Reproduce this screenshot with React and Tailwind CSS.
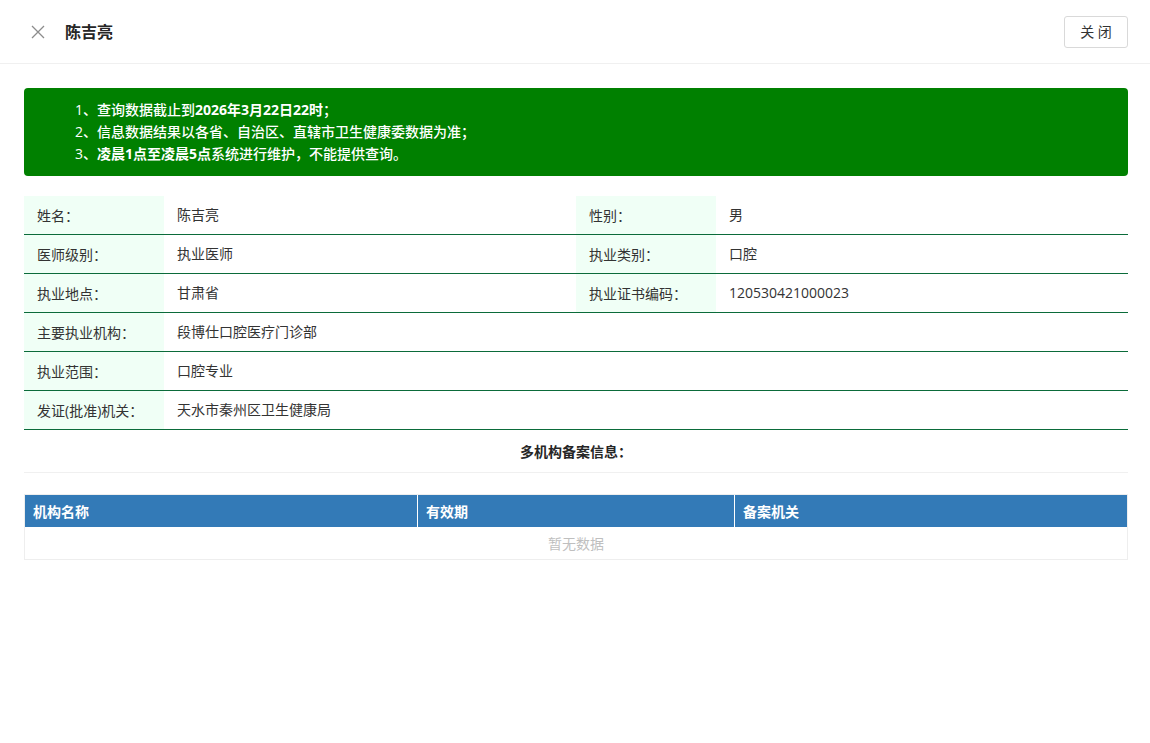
import React from "react";

const font = { fontFamily: '"Open Sans", "Noto Sans CJK SC", sans-serif' };

const InfoRow = ({ cells }) => (
  <div className="flex border-b border-[#0b6b3a] h-[39px] text-[14px] text-[#333] pb-[2px]">
    {cells.map(([label, value], i) => (
      <React.Fragment key={i}>
        <div className="w-[140px] shrink-0 bg-[#f0fff6] flex items-center pl-[13px] -mb-[2px]">{label}</div>
        <div className={`flex items-center pl-[13px] ${cells.length === 1 ? "flex-1" : "w-[412px]"}`}>
          {value}
        </div>
      </React.Fragment>
    ))}
  </div>
);

const App = () => {
  return (
    <div className="w-[1150px] min-h-[743px] bg-white" style={font}>
      <div className="h-[64px] flex items-center justify-between pl-[31px] pr-[22px] border-b border-[#f0f0f0]">
        <div className="flex items-center gap-[20px]">
          <svg width="14" height="14" viewBox="0 0 14 14">
            <path d="M1 1L13 13M13 1L1 13" stroke="#8c8c8c" strokeWidth="1.3" />
          </svg>
          <span className="text-[16px] font-semibold text-[#262626]">陈吉亮</span>
        </div>
        <button className="h-[32px] w-[64px] border border-[#d9d9d9] rounded-[3px] text-[14px] text-[#333] bg-white">
          关 闭
        </button>
      </div>

      <div className="pl-[24px] pr-[22px] pt-[24px]">
        <div className="bg-[#008000] rounded-[4px] h-[88px] pl-[51px] flex flex-col justify-center text-white text-[14px] leading-[22px] font-medium">
          <div>
            1、查询数据截止到<b className="font-bold">2026年3月22日22时</b>；
          </div>
          <div>2、信息数据结果以各省、自治区、直辖市卫生健康委数据为准；</div>
          <div>
            3、<b className="font-bold">凌晨1点至凌晨5点</b>系统进行维护，不能提供查询。
          </div>
        </div>

        <div className="mt-[20px]">
          <InfoRow cells={[["姓名：", "陈吉亮"], ["性别：", "男"]]} />
          <InfoRow cells={[["医师级别：", "执业医师"], ["执业类别：", "口腔"]]} />
          <InfoRow cells={[["执业地点：", "甘肃省"], ["执业证书编码：", "120530421000023"]]} />
          <InfoRow cells={[["主要执业机构：", "段博仕口腔医疗门诊部"]]} />
          <InfoRow cells={[["执业范围：", "口腔专业"]]} />
          <InfoRow cells={[["发证(批准)机关：", "天水市秦州区卫生健康局"]]} />
        </div>

        <div className="h-[43px] flex items-center justify-center border-b border-[#f0f0f0] text-[14px] font-bold text-[#262626]">
          多机构备案信息：
        </div>

        <div className="mt-[21px] border border-[#eeeeee]">
          <div className="flex h-[32px] bg-[#337ab7] text-white text-[14px] font-bold">
            <div className="w-[393px] flex items-center pl-[8px] border-r border-white">机构名称</div>
            <div className="w-[317px] flex items-center pl-[8px] border-r border-white">有效期</div>
            <div className="flex-1 flex items-center pl-[8px]">备案机关</div>
          </div>
          <div className="h-[32px] flex items-center justify-center text-[14px] text-[#bfbfbf]">暂无数据</div>
        </div>
      </div>
    </div>
  );
};

export default App;
